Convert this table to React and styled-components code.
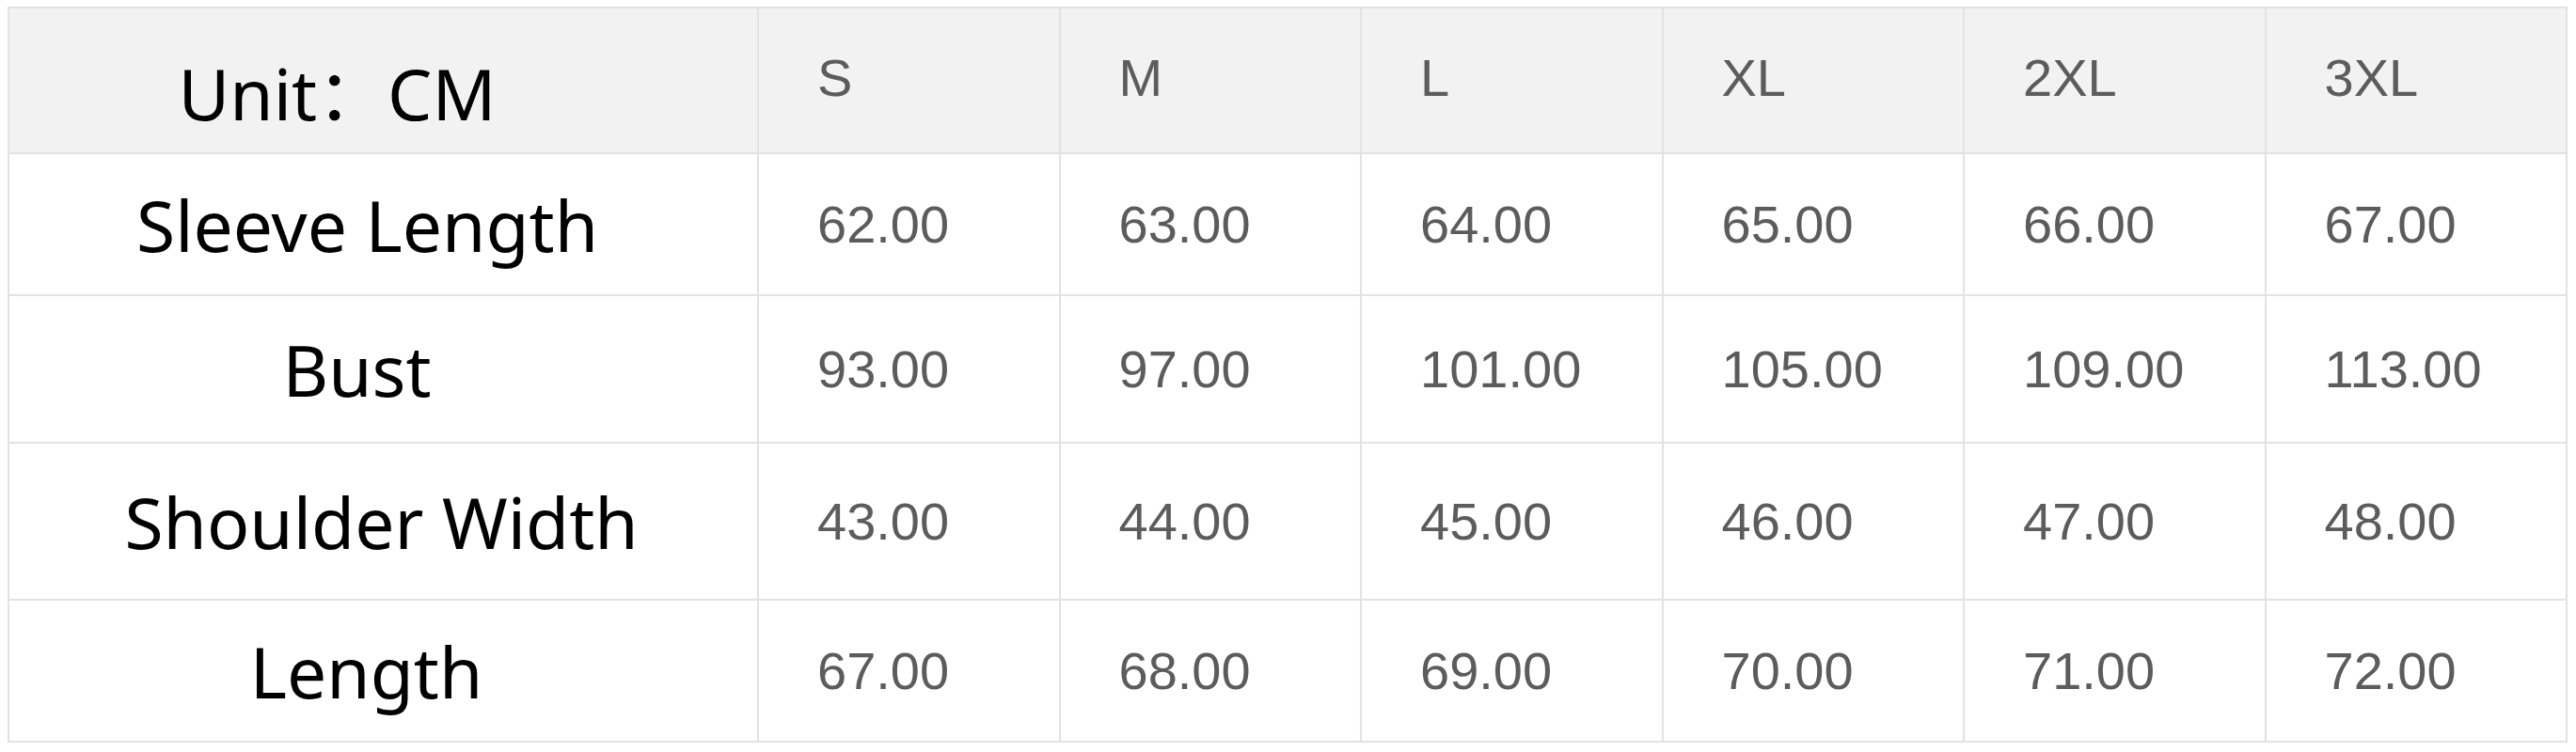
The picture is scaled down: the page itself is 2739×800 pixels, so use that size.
import styled, { createGlobalStyle } from "styled-components";

const GlobalStyle = createGlobalStyle`
  body {
    margin: 0;
    background: #fff;
  }
`;

const Page = styled.div`
  padding: 7px 9px 12px 8px;
`;

const Table = styled.div`
  display: grid;
  grid-template-columns: 797px repeat(6, 1fr);
  grid-template-rows: 155px 151px 157px 167px 151px;
  border-top: 2px solid #e2e2e2;
  border-left: 2px solid #e2e2e2;
`;

const Cell = styled.div`
  display: flex;
  align-items: center;
  border-right: 2px solid #e2e2e2;
  border-bottom: 2px solid #e2e2e2;
  background: ${(p) => (p.head ? "#f2f2f2" : "#fff")};
  box-sizing: border-box;
`;

const Label = styled(Cell)`
  justify-content: center;
  padding-top: ${(p) => (p.head ? "20px" : "0")};
  padding-right: ${(p) => p.$shift}px;
  font-family: "Noto Sans", "Noto Sans CJK SC", sans-serif;
  font-size: 75px;
  color: #000;
  white-space: nowrap;
`;

const Value = styled(Cell)`
  padding: ${(p) => (p.head ? "0 0 6px 62px" : "0 0 0 62px")};
  font-family: "Liberation Sans", Arial, sans-serif;
  font-size: 56px;
  color: #5c5c5c;
`;

const sizes = ["S", "M", "L", "XL", "2XL", "3XL"];

const rows = [
  { name: "Sleeve Length", shift: 34, values: [62, 63, 64, 65, 66, 67] },
  { name: "Bust", shift: 56, values: [93, 97, 101, 105, 109, 113] },
  { name: "Shoulder Width", shift: 4, values: [43, 44, 45, 46, 47, 48] },
  { name: "Length", shift: 36, values: [67, 68, 69, 70, 71, 72] },
];

export default function App() {
  return (
    <Page>
      <GlobalStyle />
      <Table>
        <Label head $shift={98}>
          Unit：CM
        </Label>
        {sizes.map((s) => (
          <Value head key={s}>
            {s}
          </Value>
        ))}
        {rows.map((row) => [
          <Label key={row.name} $shift={row.shift}>
            {row.name}
          </Label>,
          ...row.values.map((v, i) => (
            <Value key={row.name + i}>{v.toFixed(2)}</Value>
          )),
        ])}
      </Table>
    </Page>
  );
}
